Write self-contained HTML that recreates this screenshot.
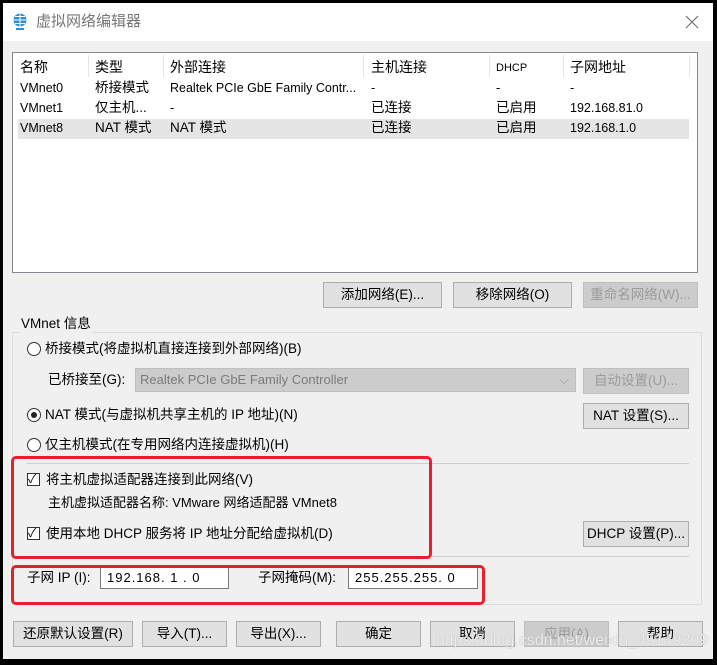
<!DOCTYPE html>
<html><head><meta charset="utf-8"><style>
*{margin:0;padding:0;box-sizing:border-box}
body{width:717px;height:665px;background:#000;position:relative;overflow:hidden;font-family:"Liberation Sans","Noto Sans CJK SC",sans-serif;font-size:13px;color:#000}
.a{position:absolute;white-space:nowrap;line-height:18px}
#win{position:absolute;left:3px;top:3px;width:710px;height:656px;background:#f0f0f0}
#title{position:absolute;left:0;top:0;width:710px;height:38px;background:#fff}
.btn{position:absolute;height:26px;background:#e1e1e1;border:1px solid #adadad;text-align:center;line-height:24px;font-size:13.5px}
.dis{color:#9a9a9a;background:#ccc;border-color:#bfbfbf}
.cb{position:absolute;width:13px;height:13px;border:1px solid #333;background:#fff}
.rd{position:absolute;width:14px;height:14px;border:1px solid #333;border-radius:50%;background:#fff}
.red{position:absolute;border:3px solid #e8202a;border-radius:5px}
.hl{position:absolute;height:1px;background:#cfcfcf}
.inp{position:absolute;height:22px;background:#fff;border:1px solid #7a7a7a;line-height:20px;padding-left:6px;font-size:13px;font-family:"Liberation Sans","Noto Sans CJK SC",sans-serif;letter-spacing:1px}
</style></head><body>
<div id="win">
<div id="title">
<svg class="a" style="left:9px;top:10px" width="16" height="18" viewBox="0 0 16 18"><circle cx="8" cy="7" r="6.5" fill="#2b8fd8"/><path d="M1.5 7h13M8 .5v13M3 3.5h10M3 10.5h10" stroke="#fff" stroke-width="1"/><path d="M4 16h8" stroke="#2b8fd8" stroke-width="2"/></svg>
<div class="a" style="left:33px;top:10px;font-size:15px;color:#777">虚拟网络编辑器</div>
<svg class="a" style="left:682px;top:12px" width="14" height="14" viewBox="0 0 14 14"><path d="M1 1L13 13M13 1L1 13" stroke="#666" stroke-width="1"/></svg>
</div>
</div>
<!-- list -->
<div class="a" style="left:12px;top:52px;width:686px;height:221px;background:#fff;border:1px solid #828790"></div>
<div class="a" style="left:88px;top:55px;width:1px;height:22px;background:#e5e5e5"></div>
<div class="a" style="left:163px;top:55px;width:1px;height:22px;background:#e5e5e5"></div>
<div class="a" style="left:363px;top:55px;width:1px;height:22px;background:#e5e5e5"></div>
<div class="a" style="left:489px;top:55px;width:1px;height:22px;background:#e5e5e5"></div>
<div class="a" style="left:563px;top:55px;width:1px;height:22px;background:#e5e5e5"></div>
<div class="a" style="left:689px;top:55px;width:1px;height:22px;background:#e5e5e5"></div>
<div class="a" style="left:20px;top:58px;font-size:14px">名称</div>
<div class="a" style="left:95px;top:58px;font-size:14px">类型</div>
<div class="a" style="left:170px;top:58px;font-size:14px">外部连接</div>
<div class="a" style="left:371px;top:58px;font-size:14px">主机连接</div>
<div class="a" style="left:496px;top:59px;font-size:11px">DHCP</div>
<div class="a" style="left:570px;top:58px;font-size:14px">子网地址</div>
<div class="a" style="left:18px;top:119px;width:671px;height:20px;background:#e5e5e5"></div>
<div class="a" style="left:20px;top:79px;font-size:12.5px">VMnet0</div><div class="a" style="left:95px;top:79px;font-size:13.5px">桥接模式</div><div class="a" style="left:170px;top:79px;font-size:12.5px">Realtek PCIe GbE Family Contr...</div><div class="a" style="left:371px;top:79px">-</div><div class="a" style="left:496px;top:79px">-</div><div class="a" style="left:570px;top:79px">-</div>
<div class="a" style="left:20px;top:99px;font-size:12.5px">VMnet1</div><div class="a" style="left:95px;top:99px;font-size:13.5px">仅主机...</div><div class="a" style="left:170px;top:99px">-</div><div class="a" style="left:371px;top:99px;font-size:13.5px">已连接</div><div class="a" style="left:496px;top:99px;font-size:13.5px">已启用</div><div class="a" style="left:570px;top:99px;font-size:12.5px">192.168.81.0</div>
<div class="a" style="left:20px;top:119px;font-size:12.5px">VMnet8</div><div class="a" style="left:95px;top:119px;font-size:13.5px">NAT 模式</div><div class="a" style="left:170px;top:119px;font-size:13.5px">NAT 模式</div><div class="a" style="left:371px;top:119px;font-size:13.5px">已连接</div><div class="a" style="left:496px;top:119px;font-size:13.5px">已启用</div><div class="a" style="left:570px;top:119px;font-size:12.5px">192.168.1.0</div>
<div class="btn" style="left:323px;top:282px;width:119px">添加网络(E)...</div>
<div class="btn" style="left:453px;top:282px;width:119px">移除网络(O)</div>
<div class="btn dis" style="left:583px;top:282px;width:115px">重命名网络(W)...</div>
<!-- group -->
<div class="a" style="left:12px;top:332px;width:690px;height:273px;border:1px solid #dcdcdc"></div>
<div class="a" style="left:19px;top:315px;background:#f0f0f0;padding:0 2px;font-size:13.5px">VMnet 信息</div>
<div class="rd" style="left:27px;top:342px"></div>
<div class="a" style="left:45px;top:340px;font-size:13.5px">桥接模式(将虚拟机直接连接到外部网络)(B)</div>
<div class="a" style="left:48px;top:371px;font-size:13.5px">已桥接至(G):</div>
<div class="a" style="left:135px;top:368px;width:441px;height:24px;background:#ccc;border:1px solid #bfbfbf;color:#7a7a7a;line-height:22px;padding-left:4px;font-size:13px">Realtek PCIe GbE Family Controller<span style="position:absolute;right:6px;color:#999">⌵</span></div>
<div class="btn dis" style="left:583px;top:368px;width:106px">自动设置(U)...</div>
<div class="rd" style="left:27px;top:408px"></div><div class="a" style="left:31px;top:412px;width:6px;height:6px;border-radius:50%;background:#222"></div>
<div class="a" style="left:45px;top:406px;font-size:13.5px">NAT 模式(与虚拟机共享主机的 IP 地址)(N)</div>
<div class="btn" style="left:583px;top:403px;width:106px">NAT 设置(S)...</div>
<div class="rd" style="left:27px;top:438px"></div>
<div class="a" style="left:45px;top:436px;font-size:13.5px">仅主机模式(在专用网络内连接虚拟机)(H)</div>
<div class="hl" style="left:27px;top:463px;width:662px"></div>
<div class="cb" style="left:27px;top:473px"></div><div class="a" style="left:28px;top:470px;font-size:12px">✓</div>
<div class="a" style="left:46px;top:471px;font-size:13.5px">将主机虚拟适配器连接到此网络(V)</div>
<div class="a" style="left:48px;top:494px;font-size:13px">主机虚拟适配器名称: VMware 网络适配器 VMnet8</div>
<div class="cb" style="left:27px;top:527px"></div><div class="a" style="left:28px;top:524px;font-size:12px">✓</div>
<div class="a" style="left:46px;top:525px;font-size:13.5px">使用本地 DHCP 服务将 IP 地址分配给虚拟机(D)</div>
<div class="btn" style="left:583px;top:521px;width:106px">DHCP 设置(P)...</div>
<div class="hl" style="left:27px;top:556px;width:662px"></div>
<div class="a" style="left:27px;top:569px;font-size:13.5px">子网 IP (I):</div>
<div class="inp" style="left:100px;top:567px;width:129px">192.168. 1 . 0</div>
<div class="a" style="left:258px;top:569px;font-size:13.5px">子网掩码(M):</div>
<div class="inp" style="left:348px;top:567px;width:130px">255.255.255. 0</div>
<div class="red" style="left:11px;top:456px;width:421px;height:103px"></div>
<div class="red" style="left:11px;top:565px;width:474px;height:40px"></div>
<div class="btn" style="left:13px;top:621px;width:120px">还原默认设置(R)</div>
<div class="btn" style="left:142px;top:621px;width:85px">导入(T)...</div>
<div class="btn" style="left:236px;top:621px;width:85px">导出(X)...</div>
<div class="btn" style="left:336px;top:621px;width:85px">确定</div>
<div class="btn" style="left:430px;top:621px;width:85px">取消</div>
<div class="btn dis" style="left:524px;top:621px;width:85px">应用(A)</div>
<div class="btn" style="left:618px;top:621px;width:85px">帮助</div>
<div class="a" style="left:436px;top:632px;font-size:16px;color:rgba(255,255,255,.8);text-shadow:0 0 1px #999">https://blog.csdn.net/weixin_45149209</div>
</body></html>
